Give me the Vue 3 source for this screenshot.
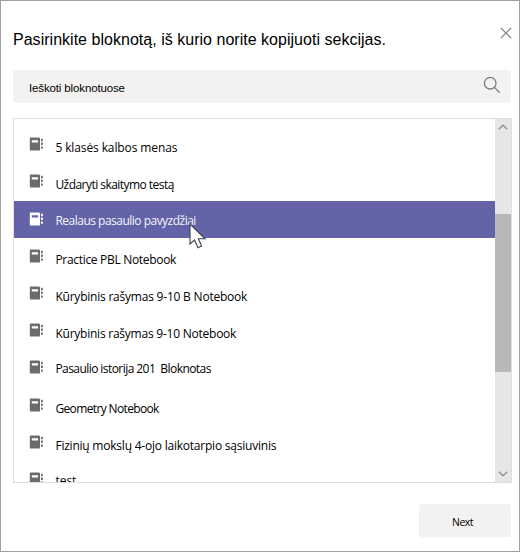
<script setup>
import { ref } from 'vue'

const selected = ref(2)
// width: rendered label length, base: text baseline inside the row
const notebooks = [
  { name: '5 klasės kalbos menas', width: 122, base: 25 },
  { name: 'Uždaryti skaitymo testą', width: 119, base: 25 },
  { name: 'Realaus pasaulio pavyzdžiai', width: 141, base: 24 },
  { name: 'Practice PBL Notebook', width: 121, base: 26 },
  { name: 'Kūrybinis rašymas 9-10 B Notebook', width: 192, base: 26 },
  { name: 'Kūrybinis rašymas 9-10 Notebook', width: 181, base: 25 },
  { name: 'Pasaulio istorija 201 \u00a0Bloknotas', width: 156, base: 23 },
  { name: 'Geometry Notebook', width: 104, base: 26 },
  { name: 'Fizinių mokslų 4-ojo laikotarpio sąsiuvinis', width: 221, base: 26 },
  { name: 'test', width: 21, base: 24 },
]
</script>

<template>
  <main class="dialog">
    <header class="header">
      <svg class="title" width="376" height="26">
        <text x="0" y="18" textLength="373">Pasirinkite bloknotą, iš kurio norite kopijuoti sekcijas.</text>
      </svg>
      <svg class="close" width="12" height="12" viewBox="0 0 12 12">
        <path d="M.8.8 11.2 11.2M11.2.8.8 11.2" />
      </svg>
    </header>

    <div class="search">
      <svg class="label" width="110" height="33">
        <text x="0" y="22" textLength="96">Ieškoti bloknotuose</text>
      </svg>
      <svg class="glass" width="18" height="18" viewBox="0 0 18 18">
        <circle cx="7.2" cy="7.2" r="5.8" />
        <path d="m11.4 11.4 5.3 5.3" />
      </svg>
    </div>

    <section class="panel">
      <ul class="list">
        <li
          v-for="(book, i) in notebooks"
          :key="book.name"
          class="row"
          :class="{ selected: i === selected }"
          @click="selected = i"
        >
          <svg class="book" width="14" height="14" viewBox="0 0 14 14">
            <path fill-rule="evenodd" d="M1.6.4H9.8Q11 .4 11 1.6V12.4Q11 13.6 9.8 13.6H1.6Q.8 13.6.8 12.8V1.2Q.8.4 1.6.4ZM2.8 3.2V5.4H9V3.2Z" />
            <path d="M12 1.8h1.8v2.4h-1.8zM12 5.6h1.8V8h-1.8zM12 9.4h1.8v2.4h-1.8z" />
          </svg>
          <svg class="name" width="300" height="37">
            <text x="0.4" :y="book.base" :textLength="book.width">{{ book.name }}</text>
          </svg>
        </li>
      </ul>
      <div class="scrollbar">
        <svg class="arrow" width="10" height="6" viewBox="0 0 10 6"><path d="m.8 5.2 4.2-4 4.2 4" /></svg>
        <div class="thumb"></div>
        <svg class="arrow" width="10" height="6" viewBox="0 0 10 6"><path d="m.8.8 4.2 4 4.2-4" /></svg>
      </div>
      <svg class="cursor" width="18" height="27" viewBox="0 0 18 27">
        <path d="M1 1V21L5.5 17 9 24.7 12.6 23 9.3 15.8H16Z" />
      </svg>
    </section>

    <footer class="footer">
      <button class="next">
        <svg width="22" height="16"><text x="0" y="12" textLength="21.5">Next</text></svg>
      </button>
    </footer>
  </main>
</template>

<style>
body { margin: 0; background: #fff; }
</style>

<style scoped>
.dialog {
  box-sizing: border-box;
  width: 520px;
  height: 552px;
  border: 1px solid #a0a0a0;
  padding: 0 7px 0 12px;
  display: flex;
  flex-direction: column;
  background: #fff;
  overflow: hidden;
  font-family: "Open Sans", "Noto Sans", sans-serif;
  font-size: 12px;
}
svg { display: block; flex: none; }
text { fill: #000; white-space: pre; }
.header {
  height: 69px;
  flex: none;
  display: flex;
  align-items: flex-start;
  justify-content: space-between;
}
.title { margin-top: 26px; font-family: "Liberation Sans", Arial, sans-serif; font-size: 16px; }
.close { margin: 26px 0 0; fill: none; stroke: #777; stroke-width: 1.1; }
.search {
  box-sizing: border-box;
  height: 33px;
  flex: none;
  margin-right: 1px;
  padding: 0 10px 0 16px;
  display: flex;
  align-items: center;
  justify-content: space-between;
  border-radius: 3px;
  background: #f3f2f1;
}
.label { font-family: "Liberation Sans", Arial, sans-serif; font-size: 11.5px; }
.glass { margin-top: -3px; fill: none; stroke: #7d7d7d; stroke-width: 1.3; }
.panel {
  position: relative;
  box-sizing: border-box;
  height: 365px;
  flex: none;
  margin-top: 15px;
  border: 1px solid #dedee3;
  display: flex;
  overflow: hidden;
}
.list { flex: 1; margin: 0; padding: 7.6px 0 0; list-style: none; }
.row { height: 37.2px; padding-left: 15px; display: flex; gap: 12px; }
.book { margin-top: 10.6px; fill: #6c6c6c; }
.selected { background: #6264a7; }
.selected .book { fill: #fff; }
.selected text { fill: #f4f4fb; }
.scrollbar {
  box-sizing: border-box;
  width: 16px;
  padding: 5px 0;
  display: flex;
  flex-direction: column;
  align-items: center;
  background: #e6e6e6;
}
.arrow { fill: none; stroke: #929292; stroke-width: 1.4; }
.thumb { width: 16px; height: 158px; margin: 84px 0 auto; background: #b8b8b8; }
.cursor { position: absolute; left: 174.5px; top: 104px; fill: #fff; stroke: #3f3f55; stroke-width: 1.1; }
.footer { display: flex; justify-content: flex-end; margin: 21px 1px 0 0; }
.next {
  width: 92px;
  height: 33px;
  border: 0;
  border-radius: 3px;
  padding: 3px 4px 0 0;
  display: flex;
  align-items: center;
  justify-content: center;
  background: #f3f2f1;
  font-family: "Open Sans", sans-serif;
  font-size: 10.5px;
}
</style>
